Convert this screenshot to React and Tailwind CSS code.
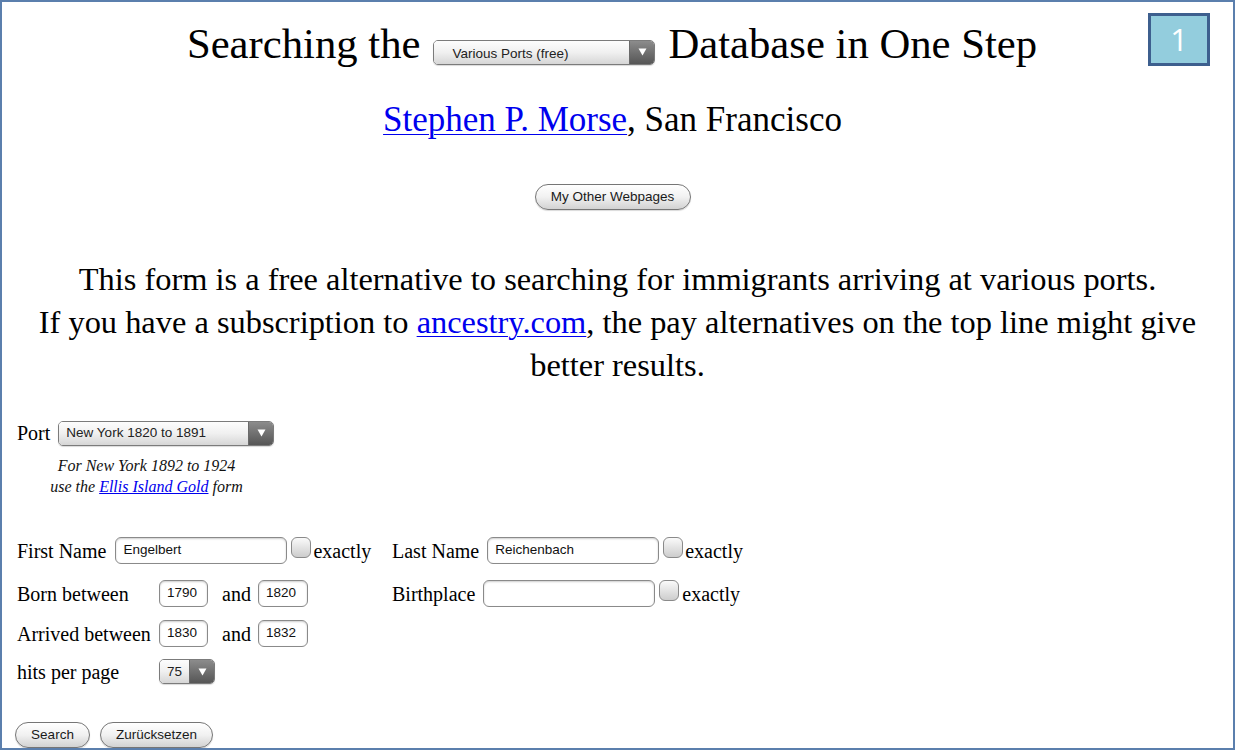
const serif = "font-['Liberation_Serif','Times_New_Roman',serif]";
const sans = "font-['Liberation_Sans',Arial,sans-serif]";

const Select = ({ label, width, pad, textPad = '' }) => (
    <div className={`flex items-stretch h-[25px] ${width} rounded-[5px] border border-[#7b7b7b] overflow-hidden ${sans} text-[13.5px] text-[#222] shadow-[0_1px_1px_rgba(0,0,0,0.15)]`}>
        <div className={`flex-1 flex items-center ${pad} ${textPad} bg-gradient-to-b from-[#fdfdfd] via-[#f0f0f0] to-[#d6d6d6] leading-none whitespace-nowrap`}>
            {label}
        </div>
        <div className="w-[25px] flex items-center justify-center bg-gradient-to-b from-[#8c8c8c] to-[#565656] border-l border-[#6a6a6a]">
            <svg width="9" height="8" viewBox="0 0 9 8">
                <path d="M0.5 0.5 H8.5 L4.5 7.5 Z" fill="#fff" />
            </svg>
        </div>
    </div>
);

const Field = ({ value = '', width }) => (
    <div className={`h-[27px] ${width} rounded-[6px] border border-[#8a8a8a] bg-white shadow-[inset_0_1px_2px_rgba(0,0,0,0.2)] flex items-center px-[7px] ${sans} text-[13.5px] text-[#111] whitespace-nowrap`}>
        {value}
    </div>
);

const Check = ({ className = '' }) => (
    <div className={`w-[20px] h-[21px] mb-[6px] rounded-[6px] border border-[#8a8a8a] bg-gradient-to-b from-[#fafafa] to-[#cdcdcd] ${className}`} />
);

const Pill = ({ children, width }) => (
    <div className={`h-[26px] ${width} rounded-full border border-[#767676] bg-gradient-to-b from-[#ffffff] via-[#f1f1f1] to-[#d2d2d2] flex items-center justify-center ${sans} text-[13.5px] text-[#1a1a1a] shadow-[0_1px_1px_rgba(0,0,0,0.15)]`}>
        {children}
    </div>
);

const App = () => {
    return (
        <div className="w-[1235px] h-[750px] bg-white">
            <div className={`relative w-[1235px] h-[750px] border-2 border-[#5b7fad] bg-white text-black ${serif} overflow-hidden`}>

                {/* numbered badge */}
                <div className="absolute left-[1146px] top-[11px] w-[62px] h-[53px] bg-[#93cddd] border-[3px] border-[#3d5f8e] flex items-center justify-center">
                    <span className="font-['Open_Sans',sans-serif] text-[31px] leading-none text-white">1</span>
                </div>

                {/* heading */}
                <div className="pt-[18px] pr-[11px] flex justify-center items-baseline gap-[13px] text-[42.7px] leading-[48px]">
                    <span>Searching the</span>
                    <Select label="Various Ports (free)" width="w-[222px]" pad="pl-[18px]" textPad="pt-[3px]" />
                    <span>Database in One Step</span>
                </div>

                <div className="mt-[32px] pr-[10px] text-center text-[35px] leading-[40px]">
                    <a href="#" className="text-[#0000ee] underline decoration-1 underline-offset-[3px]">Stephen P. Morse</a>, San Francisco
                </div>

                <div className="mt-[44px] pr-[10px] flex justify-center">
                    <Pill width="w-[156px]">My Other Webpages</Pill>
                </div>

                <p className="mt-[48px] px-[6px] text-center text-[32.4px] leading-[43px]">
                    <span>This form is a free alternative to searching for immigrants arriving at various ports.</span>
                    <br />
                    <span>If you have a subscription to </span>
                    <a href="#" className="text-[#0000ee] underline decoration-1 underline-offset-[3px]">ancestry.com</a>
                    <span>, the pay alternatives on the top line might give</span>
                    <br />
                    <span>better results.</span>
                </p>

                {/* form */}
                <div className="pl-[15px] text-[20px]">
                    <div className="mt-[31px] w-[259px]">
                        <div className="flex items-center gap-[8px]">
                            <span>Port</span>
                            <Select label="New York 1820 to 1891" width="w-[216px]" pad="pl-[7px]" />
                        </div>
                        <div className="mt-[7px] text-center italic text-[16px] leading-[21px] text-[#111]">
                            For New York 1892 to 1924
                            <br />
                            use the <a href="#" className="text-[#0000ee] underline decoration-1">Ellis Island Gold</a> form
                        </div>
                    </div>

                    <div className="mt-[40px] flex items-center h-[27px]">
                        <div className="w-[375px] flex items-center">
                            <span className="mr-[9px]">First Name</span>
                            <Field value="Engelbert" width="w-[172px]" />
                            <Check className="ml-[4px]" />
                            <span className="ml-[2px]">exactly</span>
                        </div>
                        <div className="flex items-center">
                            <span className="mr-[8px]">Last Name</span>
                            <Field value="Reichenbach" width="w-[172px]" />
                            <Check className="ml-[4px]" />
                            <span className="ml-[2px]">exactly</span>
                        </div>
                    </div>

                    <div className="mt-[16px] flex items-center h-[27px]">
                        <div className="w-[375px] flex items-center">
                            <span className="w-[142px]">Born between</span>
                            <Field value="1790" width="w-[49px]" />
                            <span className="ml-[14px] mr-[7px]">and</span>
                            <Field value="1820" width="w-[50px]" />
                        </div>
                        <div className="flex items-center">
                            <span className="mr-[8px]">Birthplace</span>
                            <Field width="w-[172px]" />
                            <Check className="ml-[4px]" />
                            <span className="ml-[3px]">exactly</span>
                        </div>
                    </div>

                    <div className="mt-[13px] flex items-center h-[27px]">
                        <span className="w-[142px]">Arrived between</span>
                        <Field value="1830" width="w-[49px]" />
                        <span className="ml-[14px] mr-[7px]">and</span>
                        <Field value="1832" width="w-[50px]" />
                    </div>

                    <div className="mt-[12px] flex items-center h-[25px]">
                        <span className="w-[142px]">hits per page</span>
                        <Select label="75" width="w-[56px]" pad="pl-[7px]" />
                    </div>

                    <div className="mt-[38px] -ml-[2px] flex items-center gap-[10px]">
                        <Pill width="w-[75px]">Search</Pill>
                        <Pill width="w-[113px]">Zurücksetzen</Pill>
                    </div>
                </div>
            </div>
        </div>
    );
};

export default App;
